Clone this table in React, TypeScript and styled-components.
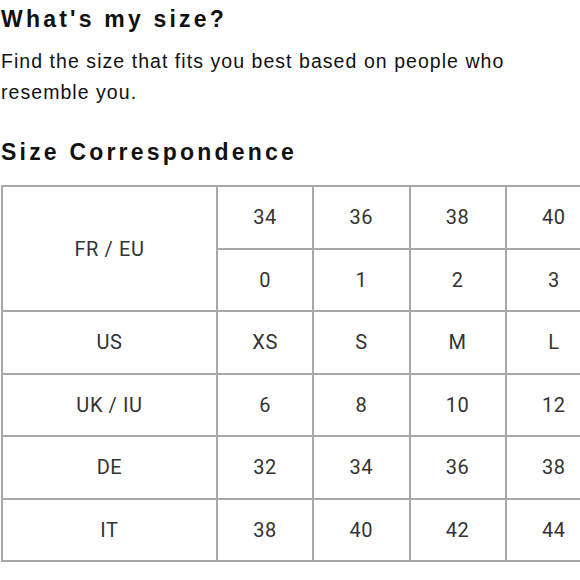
import React from 'react'
import styled, { createGlobalStyle } from 'styled-components'

const GlobalStyle = createGlobalStyle`
  html, body {
    margin: 0;
    padding: 0;
    background: #ffffff;
    overflow: hidden;
  }
`

const Page = styled.div`
  width: 580px;
  height: 580px;
  overflow: hidden;
  padding: 6px 0 0 1px;
  box-sizing: border-box;
  color: #111111;
`

const Heading = styled.h2`
  margin: 0;
  font-family: "Liberation Sans", Arial, sans-serif;
  font-weight: 700;
  font-size: 23px;
  line-height: 26px;
  letter-spacing: 3.2px;
  color: #111111;
`

const Intro = styled.p`
  margin: 14px 0 31px;
  font-family: "Liberation Sans", Arial, sans-serif;
  font-size: 19.5px;
  line-height: 31px;
  letter-spacing: 1.05px;
  color: #111111;
  width: 560px;
`

const SizeTable = styled.table`
  margin-top: 20px;
  border-collapse: collapse;
  table-layout: fixed;
  width: 602px;
  font-family: Roboto, "Noto Sans", sans-serif;
  font-size: 20px;
  letter-spacing: 0.6px;
  color: #333333;
`

const Cell = styled.td`
  border: 2px solid #a8a8a8;
  height: 60.5px;
  padding: 0;
  text-align: center;
  vertical-align: middle;
`

const LabelCell = styled(Cell)`
  width: 213px;
`

const rows: [string, string[]][] = [
  ['US', ['XS', 'S', 'M', 'L']],
  ['UK / IU', ['6', '8', '10', '12']],
  ['DE', ['32', '34', '36', '38']],
  ['IT', ['38', '40', '42', '44']],
]

const App: React.FC = () => {
  return (
    <Page>
      <GlobalStyle />
      <Heading>What's my size?</Heading>
      <Intro>Find the size that fits you best based on people who resemble you.</Intro>
      <Heading>Size Correspondence</Heading>
      <SizeTable>
        <tbody>
          <tr>
            <LabelCell rowSpan={2}>FR / EU</LabelCell>
            {['34', '36', '38', '40'].map((v) => <Cell key={v}>{v}</Cell>)}
          </tr>
          <tr>
            {['0', '1', '2', '3'].map((v) => <Cell key={v}>{v}</Cell>)}
          </tr>
          {rows.map(([label, values]) => (
            <tr key={label}>
              <LabelCell>{label}</LabelCell>
              {values.map((v, i) => <Cell key={i}>{v}</Cell>)}
            </tr>
          ))}
        </tbody>
      </SizeTable>
    </Page>
  )
}

export default App
